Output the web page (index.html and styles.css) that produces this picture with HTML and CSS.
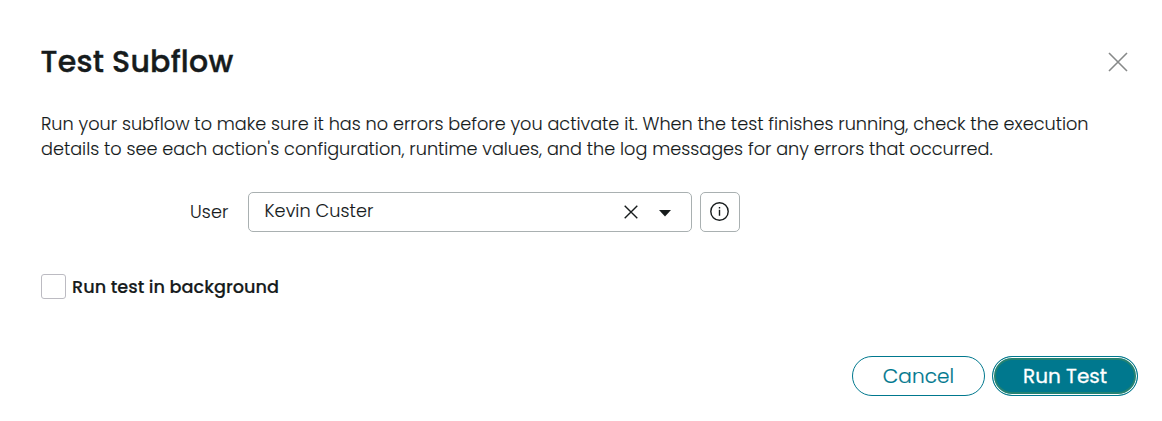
FILE: index.html
```html
<!DOCTYPE html>
<html lang="en">
<head>
<meta charset="utf-8">
<title>Test Subflow</title>
<link rel="stylesheet" href="styles.css">
</head>
<body>
<main class="dialog">
  <header class="header">
    <h1 class="title">Test Subflow</h1>
    <button class="close" aria-label="Close"><svg width="20" height="20" viewBox="0 0 20 20"><path d="M1 1 19 19M19 1 1 19"/></svg></button>
  </header>
  <p class="description"><span class="line">Run your subflow to make sure it has no errors before you activate it. When the test finishes running, check the execution</span> <span class="line">details to see each action's configuration, runtime values, and the log messages for any errors that occurred.</span></p>
  <div class="field">
    <span class="label">User</span>
    <div class="select">
      <span class="value">Kevin Custer</span>
      <svg class="clear" width="14" height="14" viewBox="0 0 14 14"><path d="M.7.7 13.3 13.3M13.3.7.7 13.3"/></svg>
      <svg class="caret" width="12" height="7" viewBox="0 0 12 7"><path d="M0 0H12L6 6.5Z"/></svg>
    </div>
    <button class="info" aria-label="Information"><svg width="19" height="19" viewBox="0 0 19 19"><circle cx="9.5" cy="9.5" r="8.7"/><path d="M9.5 7.8V13.8M9.5 5V6.5"/></svg></button>
  </div>
  <label class="background"><span class="checkbox"></span><span class="check-text">Run test in background</span></label>
  <footer class="actions">
    <button class="button cancel"><span>Cancel</span></button>
    <button class="button run"><span>Run Test</span></button>
  </footer>
</main>
</body>
</html>
```
FILE: styles.css
```css
* { box-sizing: border-box; }
body { margin: 0; background: #fff; color: #161b1c; font-family: Poppins, Inter, sans-serif; }
button { padding: 0; background: none; font-family: inherit; }
svg { display: block; fill: none; }
.dialog { height: 421px; padding: 41px 24px 0 41px; }
.header { display: flex; justify-content: space-between; height: 42px; }
.title { margin: 0 0 0 -.5px; font-size: 30px; line-height: 41px; font-weight: 500; letter-spacing: .23px; white-space: nowrap; -webkit-text-stroke: .4px #161b1c; }
.close { display: flex; align-items: center; justify-content: center; width: 40px; height: 42px; border: 0; }
.close svg { stroke: #878989; stroke-width: 1.6; }
.description { margin: 28px 0 0; font-size: 17.67px; line-height: 25px; font-weight: 300; -webkit-text-stroke: .1px #161b1c; }
.line { display: block; white-space: nowrap; }
.field { display: flex; align-items: center; height: 40px; margin-top: 31px; padding-left: 149px; font-size: 17.68px; font-weight: 300; -webkit-text-stroke: .1px #161b1c; }
.label { width: 58px; flex: none; margin-top: -2px; letter-spacing: .1px; }
.select { display: flex; align-items: center; width: 444px; height: 40px; padding: 0 20px 0 15.5px; border: 1px solid #a9b0b1; border-radius: 5px; }
.value { flex: 1; margin-top: -4px; letter-spacing: .05px; }
.clear { stroke: #161b1c; stroke-width: 1.4; margin-right: 21px; }
.caret { fill: #161b1c; margin-top: 3px; }
.info { display: flex; align-items: center; justify-content: center; width: 40px; height: 40px; margin-left: 8px; padding: 0 1px 1px 0; border: 1px solid #a9b0b1; border-radius: 5px; }
.info svg { stroke: #161b1c; stroke-width: 1.4; }
.background { display: flex; align-items: center; height: 25px; margin-top: 42px; font-size: 17.7px; font-weight: 500; -webkit-text-stroke: .15px #161b1c; }
.checkbox { width: 25px; height: 25px; margin-right: 6px; border: 1px solid #bcbbc2; border-radius: 3px; }
.actions { display: flex; justify-content: flex-end; gap: 7px; margin-top: 57px; }
.button { height: 40px; border: 1px solid #00788e; border-radius: 20px; font-size: 20px; }
.cancel { width: 133px; color: #00788e; font-weight: 300; letter-spacing: .1px; -webkit-text-stroke: .2px #00788e; }
.run { width: 146px; color: #fff; font-weight: 400; background: #00788e; box-shadow: inset 0 0 0 1px #fff, inset 0 0 0 3px #238273; -webkit-text-stroke: .3px #fff; }
```
